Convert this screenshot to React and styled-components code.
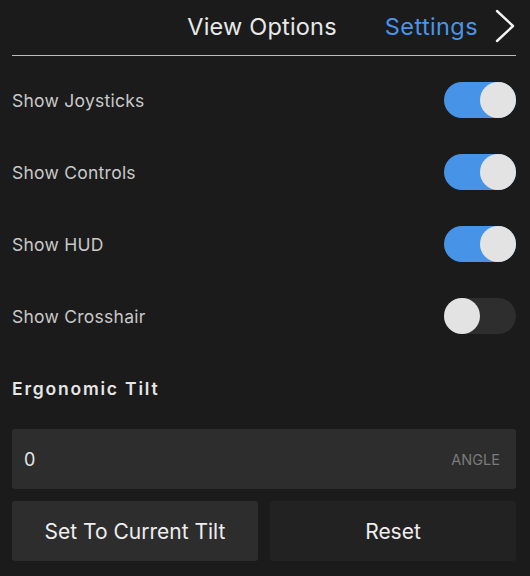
import { useState } from "react";
import styled, { createGlobalStyle } from "styled-components";

const GlobalStyle = createGlobalStyle`
  html, body {
    margin: 0;
    padding: 0;
    background: #1b1b1b;
  }
  body {
    font-family: Inter, "Noto Sans", sans-serif;
  }
`;

const rowsInit = [
  { key: "joysticks", label: "Show Joysticks", on: true },
  { key: "controls", label: "Show Controls", on: true },
  { key: "hud", label: "Show HUD", on: true },
  { key: "crosshair", label: "Show Crosshair", on: false },
];

const App = () => {
  const [rows, setRows] = useState(rowsInit);

  const flip = (key) => {
    setRows(rows.map((r) => (r.key === key ? { ...r, on: !r.on } : r)));
  };

  return (
    <Wrapper>
      <GlobalStyle />
      <Header>
        <Title>View Options</Title>
        <SettingsLink>Settings</SettingsLink>
        <Chevron viewBox="0 0 20 34">
          <path
            d="M2 2 L18 17 L2 32"
            fill="none"
            stroke="#f2f2f2"
            strokeWidth="2.4"
            strokeLinecap="round"
            strokeLinejoin="round"
          />
        </Chevron>
      </Header>
      <List>
        {rows.map((r) => (
          <Row key={r.key}>
            <Label>{r.label}</Label>
            <Toggle $on={r.on} onClick={() => flip(r.key)}>
              <Knob $on={r.on} />
            </Toggle>
          </Row>
        ))}
      </List>
      <SectionTitle>Ergonomic Tilt</SectionTitle>
      <InputBox>
        <Value>0</Value>
        <Unit>ANGLE</Unit>
      </InputBox>
      <Buttons>
        <Button $primary>Set To Current Tilt</Button>
        <Button>Reset</Button>
      </Buttons>
    </Wrapper>
  );
};

const Wrapper = styled.div`
  width: 530px;
  height: 576px;
  box-sizing: border-box;
  padding: 0 14px 0 12px;
  background: #1b1b1b;
  overflow: hidden;
`;

const Header = styled.div`
  display: flex;
  align-items: center;
  justify-content: flex-end;
  height: 56px;
  border-bottom: 1px solid #bdbdbd;
  box-sizing: border-box;
  padding-right: 1px;
`;

const Title = styled.div`
  font-size: 23.5px;
  color: #e8e8e8;
  margin-right: 48px;
  letter-spacing: 0.2px;
  margin-bottom: 2px;
`;

const SettingsLink = styled.div`
  font-size: 23.5px;
  color: #4a95e8;
  letter-spacing: 0.4px;
  margin-right: 17px;
  margin-bottom: 2px;
`;

const Chevron = styled.svg`
  width: 20px;
  height: 34px;
  margin-bottom: 4px;
`;

const List = styled.div`
  display: flex;
  flex-direction: column;
  padding-top: 8px;
`;

const Row = styled.div`
  display: flex;
  align-items: center;
  justify-content: space-between;
  height: 72px;
`;

const Label = styled.div`
  font-size: 17.5px;
  letter-spacing: 0.25px;
  color: #c9c9c9;
`;

const Toggle = styled.div`
  position: relative;
  width: 72px;
  height: 36px;
  border-radius: 18px;
  background: ${(p) => (p.$on ? "#4793e8" : "#2e2e2e")};
  cursor: pointer;
`;

const Knob = styled.div`
  position: absolute;
  top: 0;
  left: ${(p) => (p.$on ? "36px" : "0")};
  width: 36px;
  height: 36px;
  border-radius: 50%;
  background: #e3e3e3;
`;

const SectionTitle = styled.div`
  margin-top: 26px;
  font-size: 17.5px;
  font-weight: 600;
  letter-spacing: 1.8px;
  color: #e6e6e6;
`;

const InputBox = styled.div`
  display: flex;
  align-items: center;
  justify-content: space-between;
  margin-top: 30px;
  height: 60px;
  padding: 0 16px 0 12px;
  border-radius: 3px;
  background: #2d2d2d;
`;

const Value = styled.div`
  font-size: 18px;
  color: #e6e6e6;
`;

const Unit = styled.div`
  font-size: 14.5px;
  color: #7a7a7a;
`;

const Buttons = styled.div`
  display: grid;
  grid-template-columns: 1fr 1fr;
  gap: 12px;
  margin-top: 12px;
`;

const Button = styled.button`
  height: 60px;
  border: none;
  border-radius: 3px;
  font-family: Inter, "Noto Sans", sans-serif;
  font-size: 21px;
  color: #eeeeee;
  background: ${(p) => (p.$primary ? "#2d2d2d" : "#222222")};
  cursor: pointer;
`;

export default App;
